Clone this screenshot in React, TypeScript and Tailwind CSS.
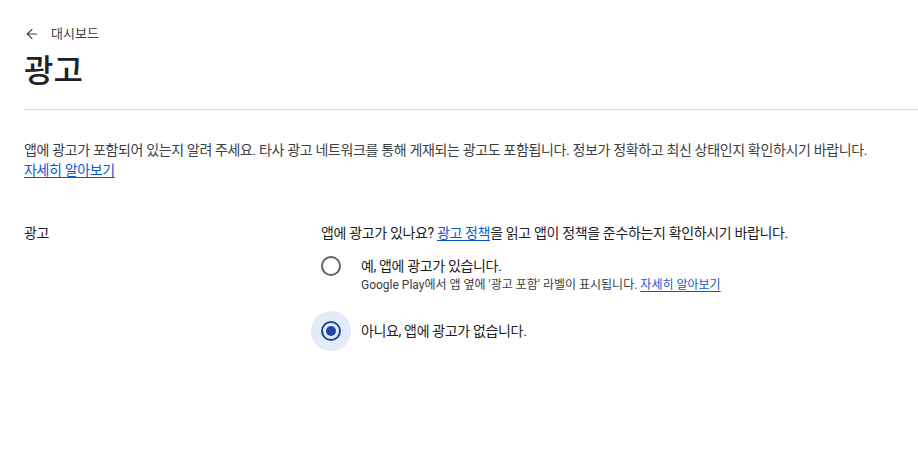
import { ArrowLeft } from "lucide-react";

const font = { fontFamily: "Roboto, 'Noto Sans CJK KR', sans-serif" };

export default function App() {
  return (
    <div className="min-h-[460px] bg-white pl-6 pt-6 text-[#202124]" style={font}>
      <a className="flex h-5 items-center gap-[11px] text-[13px] text-[#3c4043]">
        <ArrowLeft className="h-4 w-4" strokeWidth={1.75} />
        <span>대시보드</span>
      </a>
      <h1 className="mt-[7px] text-[32px] font-medium leading-[40px]">광고</h1>
      <div className="mt-[18px] h-px bg-[#dadce0]" />

      <p className="mt-[30px] text-[14px] leading-5 tracking-[-0.35px] text-[#3c4043]">
        앱에 광고가 포함되어 있는지 알려 주세요. 타사 광고 네트워크를 통해 게재되는 광고도 포함됩니다. 정보가 정확하고 최신 상태인지 확인하시기 바랍니다.
        <br />
        <a className="text-[#0b57d0] underline underline-offset-2">자세히 알아보기</a>
      </p>

      <div className="mt-[43px] flex text-[14px] leading-5 tracking-[-0.35px]">
        <div className="w-[297px] text-[#202124]">광고</div>
        <div className="flex flex-col">
          <div className="text-[#202124]">
            앱에 광고가 있나요?{" "}
            <a className="text-[#0b57d0] underline underline-offset-2">광고 정책</a>을 읽고 앱이 정책을 준수하는지 확인하시기 바랍니다.
          </div>

          <div className="mt-[13px] flex items-start">
            <div className="-ml-[10px] flex h-5 w-10 items-center justify-center">
              <span className="h-5 w-5 rounded-full border-2 border-[#5f6368]" />
            </div>
            <div className="ml-[10px] flex flex-col">
              <span className="text-[#202124]">예, 앱에 광고가 있습니다.</span>
              <span className="text-[12px] leading-[18px] tracking-normal text-[#3c4043]">
                Google Play에서 앱 옆에 '광고 포함' 라벨이 표시됩니다.{" "}
                <a className="text-[#0b57d0] underline underline-offset-2">자세히 알아보기</a>
              </span>
            </div>
          </div>

          <div className="mt-[17px] flex items-center">
            <div className="-ml-[10px] flex h-10 w-10 items-center justify-center rounded-full bg-[#e3eaf8]">
              <span className="flex h-5 w-5 items-center justify-center rounded-full border-2 border-[#1f47a3]">
                <span className="h-[10px] w-[10px] rounded-full bg-[#1f47a3]" />
              </span>
            </div>
            <span className="ml-[10px] text-[#202124]">아니요, 앱에 광고가 없습니다.</span>
          </div>
        </div>
      </div>
    </div>
  );
}
